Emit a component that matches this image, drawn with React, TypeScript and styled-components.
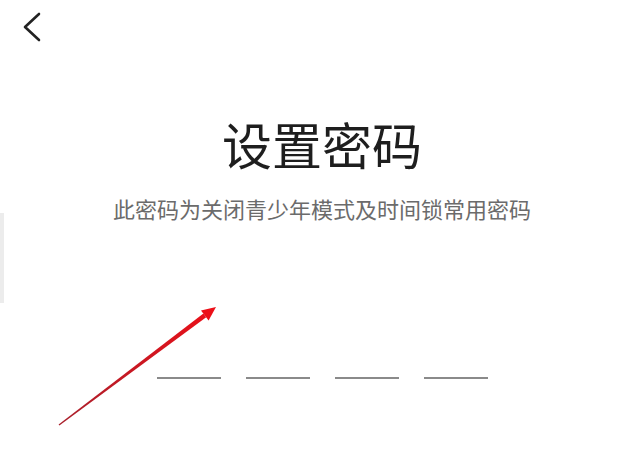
import React from 'react';
import styled, { createGlobalStyle } from 'styled-components';

const GlobalStyle = createGlobalStyle`
  html, body {
    margin: 0;
    padding: 0;
    background: #ffffff;
  }
  body {
    font-family: "Noto Sans CJK SC", "Noto Sans", sans-serif;
  }
`;

const Page = styled.div`
  position: relative;
  width: 640px;
  height: 464px;
  box-sizing: border-box;
  padding-left: 4px;
  display: flex;
  flex-direction: column;
  align-items: center;
  background: #ffffff;
  overflow: hidden;
`;

const Header = styled.div`
  align-self: stretch;
  height: 56px;
  display: flex;
  align-items: flex-start;
  padding: 11px 0 0 16px;
  box-sizing: border-box;
`;

const BackButton = styled.button`
  border: none;
  background: none;
  padding: 0;
  width: 24px;
  height: 32px;
  cursor: pointer;
  display: block;
`;

const Title = styled.h1`
  margin: 62px 0 0;
  font-size: 50px;
  line-height: 50px;
  font-weight: 400;
  color: #1e1e1e;
  letter-spacing: 0;
`;

const Subtitle = styled.p`
  margin: 29px 0 0;
  font-size: 22px;
  line-height: 22px;
  color: #6b6b6b;
`;

const CodeRow = styled.div`
  display: flex;
  gap: 25px;
  margin-top: 118px;
`;

const CodeSlot = styled.div`
  width: 64px;
  height: 40px;
  border-bottom: 2px solid #8a8a8a;
`;

const EdgeShade = styled.div`
  position: absolute;
  left: 0;
  top: 213px;
  width: 4px;
  height: 90px;
  background: #ececec;
`;

const Overlay = styled.svg`
  position: absolute;
  left: 0;
  top: 0;
  width: 640px;
  height: 464px;
  pointer-events: none;
`;

const ChevronLeft = () => (
  <svg width="24" height="32" viewBox="0 0 24 32">
    <path
      d="M19 3 L5 16 L19 29"
      fill="none"
      stroke="#222"
      strokeWidth="2.6"
      strokeLinecap="round"
      strokeLinejoin="round"
    />
  </svg>
);

const App: React.FC = () => {
  const slots = [0, 1, 2, 3];
  return (
    <>
      <GlobalStyle />
      <Page>
        <Header>
          <BackButton aria-label="返回">
            <ChevronLeft />
          </BackButton>
        </Header>
        <Title>设置密码</Title>
        <Subtitle>此密码为关闭青少年模式及时间锁常用密码</Subtitle>
        <CodeRow>
          {slots.map((i) => (
            <CodeSlot key={i} />
          ))}
        </CodeRow>
        <EdgeShade />
        <Overlay viewBox="0 0 640 464">
          <defs>
            <linearGradient id="arrowGrad" x1="59" y1="425" x2="216" y2="307" gradientUnits="userSpaceOnUse">
              <stop offset="0" stopColor="#a8202c" />
              <stop offset="1" stopColor="#ec0f18" />
            </linearGradient>
          </defs>
          <polygon
            points="59.4,425.5 58.6,424.5 203.4,313.6 206.2,317.2"
            fill="url(#arrowGrad)"
          />
          <polygon points="216,307 201,310.4 208.6,320.4" fill="#ec0f18" />
        </Overlay>
      </Page>
    </>
  );
};

export default App;
